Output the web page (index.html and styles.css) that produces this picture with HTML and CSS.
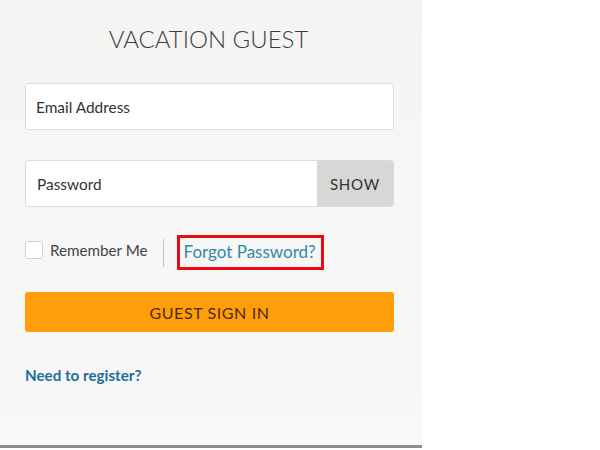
FILE: index.html
```html
<!DOCTYPE html>
<html lang="en">
<head>
<meta charset="utf-8">
<title>Vacation Guest Sign In</title>
<link rel="stylesheet" href="styles.css">
</head>
<body>
<div class="panel">
  <h1 class="title">VACATION GUEST</h1>
  <form class="form">
    <div class="field">
      <span class="placeholder">Email Address</span>
    </div>
    <div class="field field-pw">
      <span class="placeholder">Password</span>
      <span class="show">SHOW</span>
    </div>
    <div class="options">
      <label class="remember"><span class="checkbox"></span>Remember Me</label>
      <span class="sep"></span>
      <a class="forgot">Forgot Password?</a>
    </div>
    <div class="signin">GUEST SIGN IN</div>
    <a class="register">Need to register?</a>
  </form>
</div>
</body>
</html>
```
FILE: styles.css
```css
html, body {
  margin: 0;
  padding: 0;
  background: #ffffff;
}
body {
  font-family: Lato, "Open Sans", sans-serif;
  color: #333;
}
.panel {
  box-sizing: border-box;
  width: 422px;
  height: 448px;
  background: linear-gradient(180deg, #f4f4f3 0%, #f6f6f6 40%, #f8f7f9 100%);
  border-bottom: 3px solid #8c8c8c;
  padding: 24px 28px 0 25px;
}
.title {
  margin: 0;
  text-align: center;
  font-weight: 300;
  font-size: 24px;
  line-height: 29px;
  color: #3d3d3d;
  padding-right: 2px;
}
.form {
  margin-top: 30px;
  display: flex;
  flex-direction: column;
}
.field {
  box-sizing: border-box;
  height: 47px;
  background: #fff;
  border: 1px solid #dcdcdc;
  border-radius: 3px;
  display: flex;
  align-items: center;
  padding-left: 10px;
  font-size: 15.4px;
  color: #333;
}
.field-pw {
  margin-top: 30px;
  padding-left: 11px;
  overflow: hidden;
}
.placeholder {
  flex: 1;
}
.show {
  align-self: stretch;
  width: 76px;
  background: #d7d7d5;
  display: flex;
  align-items: center;
  justify-content: center;
  font-size: 15px;
  letter-spacing: 0.8px;
  color: #333;
}
.options {
  margin-top: 28px;
  display: flex;
  align-items: center;
  height: 35px;
}
.remember {
  display: flex;
  align-items: center;
  font-size: 15.2px;
  color: #444;
  margin-bottom: 5px;
}
.checkbox {
  box-sizing: border-box;
  width: 18px;
  height: 18px;
  background: #fff;
  border: 1px solid #cfcfcf;
  border-radius: 3px;
  margin-right: 7px;
}
.sep {
  width: 1px;
  height: 28px;
  background: #c4c4c4;
  margin: 0 13px 0 15px;
}
.forgot {
  border: 3px solid #ee0a12;
  padding: 3px 5px 5px 4px;
  font-size: 17px;
  color: #3189a7;
}
.signin {
  margin-top: 22px;
  height: 40px;
  border-radius: 3px;
  background: #ff9d0a;
  display: flex;
  align-items: center;
  justify-content: center;
  font-size: 16px;
  letter-spacing: 0.6px;
  color: #4a2c0a;
}
.register {
  margin-top: 34px;
  font-size: 15.2px;
  font-weight: 700;
  color: #1c6f97;
  align-self: flex-start;
}
```
